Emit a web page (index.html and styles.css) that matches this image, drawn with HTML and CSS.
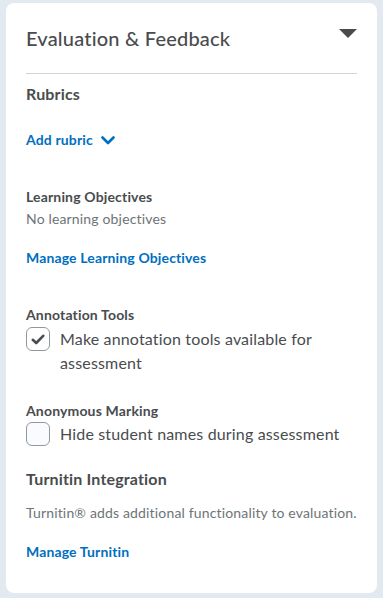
FILE: index.html
```html
<!DOCTYPE html>
<html lang="en">
<head>
  <meta charset="UTF-8">
  <meta name="viewport" content="width=device-width, initial-scale=1.0">
  <title>Evaluation &amp; Feedback</title>
  <link rel="stylesheet" href="styles.css">
</head>
<body>

<div class="card">
  <div class="card-header">
    <h2 class="card-title">Evaluation &amp; Feedback</h2>
    <svg class="collapse-icon" width="18" height="9" viewBox="0 0 18 9" aria-hidden="true">
      <path d="M0 0 H18 L9 9 Z" fill="#494c4e"/>
    </svg>
  </div>

  <!-- Rubrics -->
  <div class="section section-rubrics">
    <h3 class="heading-lg">Rubrics</h3>
    <button class="link-btn add-rubric" type="button">
      Add rubric
      <svg width="14" height="9" viewBox="0 0 14 9" aria-hidden="true">
        <path d="M1.5 1.5 L7 7 L12.5 1.5" fill="none" stroke="#006fbf" stroke-width="2.6" stroke-linecap="round" stroke-linejoin="round"/>
      </svg>
    </button>
  </div>

  <!-- Learning objectives -->
  <div class="section section-objectives">
    <h4 class="heading-sm">Learning Objectives</h4>
    <p class="muted no-objectives">No learning objectives</p>
    <a class="link manage-objectives" href="#">Manage Learning Objectives</a>
  </div>

  <!-- Annotations -->
  <div class="section section-annotations">
    <h4 class="heading-sm">Annotation Tools</h4>
    <label class="check-row">
      <span class="checkbox checked">
        <svg width="14" height="11" viewBox="0 0 14 11" aria-hidden="true">
          <path d="M1.8 5.8 L5.2 9 L12.2 1.8" fill="none" stroke="#494c4e" stroke-width="2.6" stroke-linecap="round" stroke-linejoin="round"/>
        </svg>
      </span>
      <span class="check-label">Make annotation tools available for assessment</span>
    </label>
  </div>

  <div class="section section-anonymous">
    <h4 class="heading-sm">Anonymous Marking</h4>
    <label class="check-row">
      <span class="checkbox"></span>
      <span class="check-label">Hide student names during assessment</span>
    </label>
  </div>

  <!-- Turnitin -->
  <div class="section section-turnitin">
    <h3 class="heading-lg">Turnitin Integration</h3>
    <p class="muted turnitin-desc">Turnitin® adds additional functionality to evaluation.</p>
    <a class="link manage-turnitin" href="#">Manage Turnitin</a>
  </div>
</div>

</body>
</html>
```

FILE: styles.css
```css
body {
  margin: 0;
  padding: 3px 6px 6px 6px;
  background-color: #e3e9f1;
  font-family: Lato, "Noto Sans", sans-serif;
  color: #494c4e;
  letter-spacing: 0.01em;
}
.card {
  width: 371px;
  box-sizing: border-box;
  background-color: #ffffff;
  border-radius: 8px;
  padding: 21px 20px 31px 20px;
}
.card-header {
  display: flex;
  justify-content: space-between;
  align-items: flex-start;
  padding-bottom: 21px;
  border-bottom: 1px solid #cdd5dc;
}
.card-title {
  margin: 0;
  font-size: 20px;
  line-height: 28px;
  font-weight: 500;
  letter-spacing: 0.01em;
}
.collapse-icon {
  margin-top: 5px;
}
h3, h4, p {
  margin: 0;
}
.heading-lg {
  font-size: 16px;
  line-height: 24px;
  font-weight: 700;
}
.heading-sm {
  font-size: 14px;
  line-height: 20px;
  font-weight: 700;
}
.muted {
  font-size: 14px;
  line-height: 20px;
  color: #6e7477;
}
.link, .link-btn {
  display: inline-block;
  font-family: inherit;
  font-size: 14px;
  line-height: 20px;
  font-weight: 700;
  letter-spacing: 0.01em;
  color: #006fbf;
  text-decoration: none;
}
.link-btn {
  display: inline-flex;
  align-items: center;
  gap: 8px;
  padding: 0;
  border: none;
  background: none;
  cursor: pointer;
}
.section-rubrics {
  margin-top: 8px;
}
.add-rubric {
  margin-top: 24px;
}
.section-objectives {
  margin-top: 37px;
}
.no-objectives {
  margin-top: 2px;
}
.manage-objectives {
  margin-top: 19px;
}
.section-annotations {
  margin-top: 37px;
}
.section-anonymous {
  margin-top: 26px;
}
.section-turnitin {
  margin-top: 21px;
}
.turnitin-desc {
  margin-top: 12px;
}
.manage-turnitin {
  margin-top: 19px;
}
.check-row {
  display: flex;
  align-items: flex-start;
  gap: 10px;
  margin-top: 2px;
}
.section-anonymous .check-row {
  margin-top: 1px;
}
.checkbox {
  flex: none;
  width: 24px;
  height: 24px;
  box-sizing: border-box;
  border: 1px solid #90989d;
  border-radius: 6px;
  background-color: #f9fbff;
  display: flex;
  align-items: center;
  justify-content: center;
}
.checkbox.checked {
  background-color: #ffffff;
}
.check-label {
  font-size: 16px;
  line-height: 24px;
}
```
